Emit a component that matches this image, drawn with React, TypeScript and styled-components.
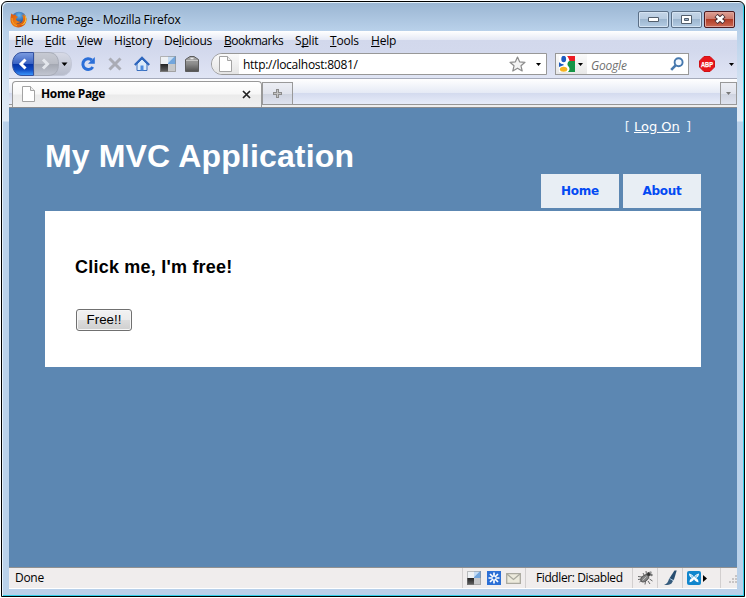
import React from "react";
import styled, { createGlobalStyle } from "styled-components";

const Global = createGlobalStyle`
  * { box-sizing: border-box; }
  body { margin: 0; background: #fff; overflow: hidden; }
  svg { display: block; flex: none; }
`;

const Frame = styled.div`
  width: 744px;
  height: 596px;
  margin: 1px;
  border: 1px solid #000;
  border-radius: 6px 6px 0 0;
  overflow: hidden;
  background: linear-gradient(#9ab5d2 0, #b9d1ea 29px, #dce8f5 100px, #e1ebf6 119px, #b9d1ea 120px);
  box-shadow: inset 1px 1px 0 #e4f1fb, inset -1px -1px 0 #2fd0ea;
  font: 12px "Open Sans", "Noto Sans", sans-serif;
  color: #000;
  padding: 0 7px;
  display: flex;
  flex-direction: column;
`;

const TitleBar = styled.div`
  height: 29px;
  flex: none;
  display: flex;
  align-items: center;
  padding: 5px 2px 0 1px;
`;
const Caption = styled.span`
  margin-left: 4px;
  padding-top: 1px;
  flex: 1;
  letter-spacing: -0.21px;
  line-height: 16px;
  white-space: nowrap;
  text-shadow: 0 0 5px #d8e6f4;
`;
const CaptionButton = styled.div<{ $close?: boolean }>`
  width: 31px;
  height: 17px;
  margin-left: 2px;
  border: 1px solid ${(p) => (p.$close ? "#4c1a20" : "#5b6f86")};
  border-radius: 2px;
  box-shadow: inset 0 0 0 1px ${(p) => (p.$close ? "#e0a49b" : "#d5e3f2")};
  background: ${(p) =>
    p.$close
      ? "linear-gradient(#dd9f94 0, #cb7869 48%, #b03c26 50%, #cb6a55 100%)"
      : "linear-gradient(#c4d5e7 0, #b7cbe0 48%, #9db6cf 50%, #b4cce4 100%)"};
  display: flex;
  align-items: center;
  justify-content: center;
`;

const MenuBar = styled.div`
  height: 21px;
  flex: none;
  display: flex;
  padding-left: 6px;
  background: linear-gradient(#fff 0, #e5e9f5 9px, #d2d8ec 9px, #d3d9ed 100%);
  line-height: 20px;
`;
const MenuItem = styled.span<{ $w: number; $ls?: number }>`
  width: ${(p) => p.$w}px;
  letter-spacing: ${(p) => p.$ls ?? -0.2}px;
  white-space: nowrap;
  u { text-underline-offset: 1px; text-decoration-skip-ink: none; }
`;

const NavBar = styled.div`
  height: 26px;
  flex: none;
  display: flex;
  align-items: center;
  padding: 0 2px 2px 3px;
  background: linear-gradient(#d3d9ed, #e0e5f5);
`;
const NavIcon = styled.span<{ $gap: number }>`
  margin-left: ${(p) => p.$gap}px;
`;
const AddressBar = styled.div`
  width: 336px;
  height: 22px;
  margin-left: 11px;
  border: 1px solid #989898;
  border-radius: 11px 0 0 11px;
  background: #fff;
  display: flex;
  align-items: center;
  overflow: hidden;
`;
const Identity = styled.div`
  width: 27px;
  height: 20px;
  padding: 2px 0 0 7px;
  background: linear-gradient(#fafafa, #e4e4e4);
`;
const Url = styled.span`
  flex: 1;
  padding: 2px 0 0 4px;
  letter-spacing: -0.26px;
  line-height: 18px;
`;
const SearchBox = styled.div`
  width: 134px;
  height: 22px;
  margin-left: 8px;
  border: 1px solid #989898;
  background: #fff;
  display: flex;
  align-items: center;
`;
const Engine = styled.div`
  width: 31px;
  height: 20px;
  display: flex;
  align-items: center;
  gap: 3px;
  padding-left: 3px;
  background: linear-gradient(#fafafa, #e8e8e8);
`;
const Placeholder = styled.span`
  flex: 1;
  padding: 2px 0 0 4px;
  font-style: italic;
  color: #707070;
  letter-spacing: -0.2px;
`;

const TabStrip = styled.div`
  height: 30px;
  flex: none;
  display: flex;
  align-items: flex-start;
  border-top: 1px solid #a6abbb;
  border-bottom: 1px solid #8a8d92;
  padding: 2px 0 0 3px;
  background: linear-gradient(#fff 0, #e5eaf5 14px, #d3daee 14px, #e7ecf9 25px, #979797 25px, #979797 26px, #eee 26px);
`;
const Tab = styled.div`
  width: 250px;
  height: 26px;
  border: 1px solid #999;
  border-bottom: 0;
  border-radius: 4px 4px 0 0;
  background: linear-gradient(#fff 0, #f7f7f7 12px, #ebebeb 13px, #f0f0f0);
  display: flex;
  align-items: center;
  padding: 1px 10px 2px 9px;
  font-weight: 700;
`;
const TabTitle = styled.span`
  flex: 1;
  margin-left: 6px;
  letter-spacing: -0.36px;
  line-height: 16px;
`;
const StripButton = styled.div<{ $w: number }>`
  width: ${(p) => p.$w}px;
  height: 23px;
  margin-top: 1px;
  border: 1px solid #999;
  background: linear-gradient(#eceef4 0, #e0e3ec 11px, #cfd4e0 11px, #dfe3ee);
  display: flex;
  align-items: center;
  justify-content: center;
`;
const Spacer = styled.div`
  flex: 1;
`;

const Page = styled.main`
  flex: 1;
  background: #5c87b2;
  padding: 0 36px;
  display: flex;
  flex-direction: column;
`;
const LogOn = styled.div`
  height: 30px;
  padding: 11px 10px 0 0;
  text-align: right;
  font: 13px/16px "DejaVu Sans", sans-serif;
  color: #e8f1fa;
  white-space: nowrap;
  a { color: #fff; text-decoration: underline; margin: 0 2px 0 0; }
`;
const SiteTitle = styled.h1`
  margin: 0;
  height: 36px;
  font: bold 32px/37px "Liberation Sans", Arial, sans-serif;
  letter-spacing: 0.15px;
  color: #fff;
  white-space: nowrap;
`;
const SiteNav = styled.nav`
  display: flex;
  justify-content: flex-end;
  gap: 4px;
  height: 37px;
`;
const NavLink = styled.a`
  width: 78px;
  height: 34px;
  background: #e8eef4;
  color: #034af3;
  font: bold 12px/34px "DejaVu Sans", sans-serif;
  letter-spacing: -0.25px;
  text-align: center;
`;
const Content = styled.section`
  height: 156px;
  background: #fff;
  padding: 45px 30px 0;
`;
const Heading = styled.h2`
  margin: 0;
  font: bold 18px/22px "Liberation Sans", Arial, sans-serif;
  letter-spacing: 0.22px;
`;
const FreeButton = styled.button`
  display: block;
  width: 56px;
  height: 22px;
  margin: 31px 0 0 1px;
  padding: 0;
  border: 1px solid #707070;
  border-radius: 3px;
  box-shadow: inset 0 0 0 1px #f6f6f6;
  background: linear-gradient(#f2f2f2 0, #ebebeb 50%, #dddddd 50%, #cfcfcf);
  font: 13.33px/20px "Liberation Sans", Arial, sans-serif;
  color: #000;
`;

const StatusBar = styled.footer`
  height: 22px;
  flex: none;
  margin-bottom: 7px;
  border-top: 1px solid #919191;
  border-bottom: 1px solid #fff;
  background: #f0eded;
  display: flex;
  line-height: 20px;
`;
const StatusText = styled.span`
  flex: 1;
  padding-left: 6px;
  letter-spacing: -0.3px;
`;
const StatusPanel = styled.div<{ $w: number; $pad: number }>`
  width: ${(p) => p.$w}px;
  padding-left: ${(p) => p.$pad}px;
  border-left: 1px solid #d2cfcf;
  display: flex;
  align-items: center;
  gap: 4px;
  letter-spacing: -0.4px;
  white-space: nowrap;
`;

const Caret = ({ color = "#000" }: { color?: string }) => (
  <svg width="5" height="3"><path d="M0 0h5L2.5 3z" fill={color} /></svg>
);

const FirefoxIcon = () => (
  <svg width="17" height="17" viewBox="0 0 17 17">
    <defs>
      <radialGradient id="globe" cx=".5" cy=".25" r=".7">
        <stop offset="0" stopColor="#66b8ef" /><stop offset="1" stopColor="#142a78" />
      </radialGradient>
      <linearGradient id="fox" x1="0" y1="0" x2="1" y2="1">
        <stop offset="0" stopColor="#d8540c" /><stop offset=".5" stopColor="#ee7d14" /><stop offset="1" stopColor="#c63a06" />
      </linearGradient>
    </defs>
    <circle cx="9" cy="8" r="7.3" fill="url(#globe)" />
    <path d="M1.4 2.5 3.5 4 6 3.6C5.3 4.5 5.6 5.3 7.8 5.8 7.5 7 6.2 7.2 6 8c.1 2.2 2.8 3.2 5 1.9-1 2.3-3.5 2.5-4.7 2 2.2 1.5 6.3.3 6.8-3.4.3-2.3-.5-3.6-1.3-4.7 1.1.4 1.8 1 2.2 1.6-.1-1.4-.8-2.3-1.5-3 2.8 1.2 4.1 3.8 4 6.4-.2 4.2-3.5 7.7-8.1 7.7C3.8 16.500.4 13.200.5 8.800.5 6 .9 4 1.400 2.500z" fill="url(#fox)" />
    <path d="M14.300 3.500c2.300 4.200.6 9.400-3.800 10.600 2.900.2 6-2.100 5.900-6.100-.1-1.800-.9-3.400-2.100-4.500z" fill="#fbc73a" />
    <path d="M2 7c-.3 4 2 7 5 7.800" stroke="#f7a32b" fill="none" />
  </svg>
);

const BackForward = () => (
  <svg width="60" height="24" viewBox="0 0 60 24">
    <defs>
      <linearGradient id="back" x1="0" y1="0" x2="0" y2="1">
        <stop offset="0" stopColor="#7d9ce0" /><stop offset=".48" stopColor="#3a63c4" />
        <stop offset=".52" stopColor="#0634a8" /><stop offset=".75" stopColor="#0f4cc4" /><stop offset="1" stopColor="#3f9bff" />
      </linearGradient>
      <linearGradient id="fwd" x1="0" y1="0" x2="0" y2="1">
        <stop offset="0" stopColor="#c7cad3" /><stop offset=".49" stopColor="#b9bcc5" />
        <stop offset=".51" stopColor="#a4a8b2" /><stop offset="1" stopColor="#c2c6d2" />
      </linearGradient>
      <linearGradient id="tail" x1="0" y1="0" x2="0" y2="1">
        <stop offset="0" stopColor="#d7dae6" /><stop offset="1" stopColor="#b7bccb" />
      </linearGradient>
    </defs>
    <path d="M10 .5h40c6 0 9.500 5 9.500 11.500S56 23.500 50 23.500H10C4 23.500.5 18 .5 12S4 .5 10 .5z" fill="url(#tail)" stroke="#c3c8d8" />
    <path d="M22 .5h14c8 0 10.500 5 10.500 11.500S44 23.500 36 23.500H22z" fill="url(#fwd)" stroke="#a7abb7" />
    <path d="M10 .5h11.500v23H10C4 23.500.5 18 .5 12S4 .5 10 .5z" fill="url(#back)" stroke="#3452a0" />
    <path d="M13.500 7.500 9 12l4.500 4.500" fill="none" stroke="#fff" strokeWidth="3" />
    <path d="m31 7.500 4.500 4.500-4.500 4.500" fill="none" stroke="#e3e6ec" strokeWidth="3" />
    <path d="M49.500 10.500h6l-3 3.500z" fill="#000" />
  </svg>
);

const ReloadIcon = () => (
  <svg width="16" height="16" viewBox="0 0 16 16">
    <path d="M12.800 11A5.400 5.400 0 1 1 11.800 4" fill="none" stroke="#2b6fd8" strokeWidth="3" />
    <path d="M14.800 1v6.800H8z" fill="#2b6fd8" />
  </svg>
);
const StopIcon = () => (
  <svg width="16" height="16" viewBox="0 0 16 16">
    <path d="m2.500 2.500 11 11m0-11-11 11" stroke="#aaacb5" strokeWidth="3" />
  </svg>
);
const HomeIcon = () => (
  <svg width="16" height="16" viewBox="0 0 16 16">
    <path d="M3 8v6.500h10V8L8 3z" fill="#dceafa" stroke="#3b6fbd" />
    <path d="M.8 9 8 1.800 15.200 9" fill="none" stroke="#2e66bd" strokeWidth="2.200" />
    <path d="M6.500 14.500v-5h3v5" fill="#4d8be0" />
  </svg>
);
const DeliciousIcon = ({ size = 16 }: { size?: number }) => (
  <svg width={size} height={size} viewBox="0 0 16 16">
    <defs>
      <linearGradient id="dark" x1="0" y1="0" x2="0" y2="1"><stop offset="0" stopColor="#222" /><stop offset="1" stopColor="#666" /></linearGradient>
      <linearGradient id="sky" x1="0" y1="0" x2="1" y2="1"><stop offset=".4" stopColor="#c5dcf4" /><stop offset=".5" stopColor="#73a6dd" /></linearGradient>
    </defs>
    <path d="M0 0h8v8H0z" fill="#eef1f4" /><path d="M8 0h8v8H8z" fill="url(#sky)" />
    <path d="M0 8h8v8H0z" fill="url(#dark)" /><path d="M8 8h8v8H8z" fill="#c7c8ca" />
    <path d="M.5.5h15v15H.5z" fill="none" stroke="#888" strokeOpacity=".6" />
  </svg>
);
const TagIcon = () => (
  <svg width="16" height="16" viewBox="0 0 16 16">
    <defs><linearGradient id="tag" x1="0" y1="0" x2="0" y2="1"><stop offset="0" stopColor="#a8a8a8" /><stop offset=".5" stopColor="#8a8a8a" /><stop offset="1" stopColor="#505050" /></linearGradient></defs>
    <path d="M1.500 15.500V3.500L6 .5h4l4.500 3v12z" fill="url(#tag)" stroke="#5c5c5c" />
    <path d="M2 4.500h12" stroke="#c4c4c4" /><path d="M6.500 2.500h3" stroke="#e8e8e8" strokeWidth="1.500" />
  </svg>
);
const DocIcon = ({ w = 13, h = 16 }: { w?: number; h?: number }) => (
  <svg width={w} height={h} viewBox="0 0 13 16">
    <path d="M.5.5H8.500l4 4v11H.5z" fill="#fff" stroke="#a3a3a3" /><path d="M8.500.5v4h4" fill="#eee" stroke="#a3a3a3" />
  </svg>
);
const StarIcon = () => (
  <svg width="17" height="16" viewBox="0 0 17 16">
    <path d="m8.500 1 2.100 4.800 5.400.5-4 3.500 1.200 5.200-4.700-2.800L3.800 15 5 9.800l-4-3.500 5.400-.5z" fill="#f3f3f3" stroke="#8c8c8c" strokeWidth="1.200" strokeLinejoin="round" />
  </svg>
);
const GoogleIcon = () => (
  <svg width="16" height="16" viewBox="0 0 16 16">
    <path d="M0 0h16v16H0z" fill="#fff" />
    <path d="M8 0h8v5h-5.500C10 3 9.300 1 8 0z" fill="#ed1c24" />
    <path d="M10 5h6v11H9c2-2 2-4 .5-5.500C8 9 8 7 10 5z" fill="#159447" />
    <path d="M0 6c2 2.500 4 1.500 5 3L0 11z" fill="#1d5bbf" />
    <ellipse cx="4.700" cy="3" rx="2.400" ry="3.200" fill="#1d5bbf" />
    <ellipse cx="4.600" cy="13.300" rx="3.700" ry="2.500" fill="#f5b321" />
  </svg>
);
const SearchIcon = () => (
  <svg width="14" height="14" viewBox="0 0 14 14">
    <circle cx="8.600" cy="5.300" r="4" fill="#f2f8ff" stroke="#4678ae" strokeWidth="1.900" />
    <path d="M5.600 8.400 1.200 12.800" stroke="#4678ae" strokeWidth="2.600" />
  </svg>
);
const AdblockIcon = () => (
  <svg width="16" height="16" viewBox="0 0 16 16" overflow="visible">
    <path d="M5 .5h6L15.500 5v6L11 15.500H5L.5 11V5z" fill="#e8151a" stroke="#cf1116" />
    <text x="2" y="10.800" fontFamily="Liberation Sans" fontWeight="bold" fontSize="7.500" textLength="12" lengthAdjust="spacingAndGlyphs" fill="#fff" stroke="#fff" strokeWidth=".25">ABP</text>
  </svg>
);
const SnowIcon = () => (
  <svg width="14" height="14" viewBox="0 0 14 14">
    <path d="M0 0h14v14H0z" fill="#2b6fd6" />
    <path d="M7 1.500v4M7 8.500v4M1.500 7h4M8.500 7h4M3 3l3 3M8 8l3 3M11 3 8 6M6 8l-3 3" stroke="#fff" strokeWidth="1.700" />
  </svg>
);
const MailIcon = () => (
  <svg width="15" height="11" viewBox="0 0 15 11">
    <path d="M.7.700h13.600v9.600H.7z" fill="#eceadc" stroke="#aaa99f" strokeWidth="1.300" />
    <path d="m1 1 6.500 5.500L14 1" fill="none" stroke="#aaa99f" strokeWidth="1.300" />
  </svg>
);
const BugIcon = () => (
  <svg width="17" height="16" viewBox="0 0 17 16">
    <path d="M1 6.500 5 7M2.500 12l3-2.500M8 14.500 8.500 11M6 3l1.500 3M9 1l.5 4M12.500 9l3 2M11 11l2 3M1 9.500l4-.5" stroke="#666" fill="none" />
    <ellipse cx="7.800" cy="8.200" rx="4.500" ry="2.700" transform="rotate(-40 7.800 8.200)" fill="#858585" stroke="#555" />
    <path d="m5.500 10.500 4-4" stroke="#bbb" />
    <circle cx="12" cy="4" r="2" fill="#333" /><circle cx="13.500" cy="2.500" r="1.200" fill="#999" /><circle cx="14.500" cy="5" r="1.200" fill="#777" />
  </svg>
);
const BrushIcon = () => (
  <svg width="15" height="16" viewBox="0 0 15 16">
    <path d="M11.500.5h2.200l-2.700 9L6.500 12 6 9z" fill="#274d70" />
    <path d="m6 9 4 2-1.500 2.500c-2 1.500-5 1.700-7.500 1.500C4 14 5 12 6 9z" fill="#375c7d" />
    <path d="m6.500 8.500 4 2" stroke="#a8c5dc" />
  </svg>
);
const ButterflyIcon = () => (
  <svg width="14" height="14" viewBox="0 0 14 14">
    <rect width="14" height="14" rx="2" fill="#1186cd" />
    <path d="M2 2.500c2.200.2 4 1.800 5 3.700 1-1.900 2.800-3.500 5-3.700 0 2.200-1 3.800-3 4.500 1.500.7 2.500 2 2.500 4.300C9.300 11 8 10 7 8.300 6 10 4.700 11 2.500 11.300c0-2.300 1-3.600 2.500-4.300C3 6.300 2 4.700 2 2.500z" fill="#fff" />
    <path d="M3.700 4.300C5 5 5.500 6 5.500 6.500M10.300 4.300C9 5 8.500 6 8.500 6.500" fill="none" stroke="#1186cd" strokeWidth=".8" />
  </svg>
);
const Grip = () => (
  <svg width="9" height="9" viewBox="0 0 9 9">
    <path d="M7 1h2v2H7zM4 4h2v2H4zM7 4h2v2H7zM1 7h2v2H1zM4 7h2v2H4zM7 7h2v2H7z" fill="#c8c5c5" />
  </svg>
);

export default function App() {
  return (
    <>
      <Global />
      <Frame>
        <TitleBar>
          <FirefoxIcon />
          <Caption>Home Page - Mozilla Firefox</Caption>
          <CaptionButton>
            <svg width="11" height="5"><path d="M.5.5h10v4H.5z" fill="#fff" stroke="#525e6c" /></svg>
          </CaptionButton>
          <CaptionButton>
            <svg width="11" height="9"><path d="M.5.5h10v8H.5z" fill="#fff" stroke="#525e6c" /><path d="M3.500 3.500h4v2h-4z" fill="#9bb2cb" stroke="#525e6c" /></svg>
          </CaptionButton>
          <CaptionButton $close>
            <svg width="12" height="10"><path d="m2 1.500 8 7m0-7-8 7" stroke="#4b3035" strokeWidth="4.600" /><path d="m2.500 2 7 6m0-6-7 6" stroke="#fff" strokeWidth="2.600" /></svg>
          </CaptionButton>
        </TitleBar>

        <MenuBar>
          <MenuItem $w={30}><u>F</u>ile</MenuItem>
          <MenuItem $w={32}><u>E</u>dit</MenuItem>
          <MenuItem $w={37}><u>V</u>iew</MenuItem>
          <MenuItem $w={50}>Hi<u>s</u>tory</MenuItem>
          <MenuItem $w={60} $ls={-0.3}>De<u>l</u>icious</MenuItem>
          <MenuItem $w={71} $ls={-0.45}><u>B</u>ookmarks</MenuItem>
          <MenuItem $w={35}>S<u>p</u>lit</MenuItem>
          <MenuItem $w={41}><u>T</u>ools</MenuItem>
          <MenuItem $w={40}><u>H</u>elp</MenuItem>
        </MenuBar>

        <NavBar>
          <BackForward />
          <NavIcon $gap={8}><ReloadIcon /></NavIcon>
          <NavIcon $gap={11}><StopIcon /></NavIcon>
          <NavIcon $gap={11}><HomeIcon /></NavIcon>
          <NavIcon $gap={10}><DeliciousIcon /></NavIcon>
          <NavIcon $gap={8}><TagIcon /></NavIcon>
          <AddressBar>
            <Identity><DocIcon /></Identity>
            <Url>http://localhost:8081/</Url>
            <StarIcon />
            <NavIcon $gap={10}><Caret /></NavIcon>
            <NavIcon $gap={5} />
          </AddressBar>
          <SearchBox>
            <Engine><GoogleIcon /><Caret /></Engine>
            <Placeholder>Google</Placeholder>
            <SearchIcon />
            <NavIcon $gap={4} />
          </SearchBox>
          <NavIcon $gap={10}><AdblockIcon /></NavIcon>
          <NavIcon $gap={14}><Caret /></NavIcon>
        </NavBar>

        <TabStrip>
          <Tab>
            <DocIcon />
            <TabTitle>Home Page</TabTitle>
            <svg width="9" height="9"><path d="m1 1 7 7m0-7-7 7" stroke="#222" strokeWidth="1.700" /></svg>
          </Tab>
          <StripButton $w={31}>
            <svg width="9" height="9"><path d="M4.500 0v9M0 4.500h9" stroke="#8c8c8c" strokeWidth="3" /><path d="M4.500 1v7M1 4.500h7" stroke="#c4c4c4" /></svg>
          </StripButton>
          <Spacer />
          <StripButton $w={17}><Caret color="#777" /></StripButton>
        </TabStrip>

        <Page>
          <LogOn>[ <a>Log On</a> ]</LogOn>
          <SiteTitle>My MVC Application</SiteTitle>
          <SiteNav>
            <NavLink>Home</NavLink>
            <NavLink>About</NavLink>
          </SiteNav>
          <Content>
            <Heading>Click me, I'm free!</Heading>
            <FreeButton>Free!!</FreeButton>
          </Content>
        </Page>

        <StatusBar>
          <StatusText>Done</StatusText>
          <StatusPanel $w={63} $pad={4}>
            <DeliciousIcon size={14} />
            <NavIcon $gap={2}><SnowIcon /></NavIcon>
            <NavIcon $gap={1}><MailIcon /></NavIcon>
          </StatusPanel>
          <StatusPanel $w={107} $pad={10}>Fiddler: Disabled</StatusPanel>
          <StatusPanel $w={25} $pad={4}><BugIcon /></StatusPanel>
          <StatusPanel $w={25} $pad={5}><BrushIcon /></StatusPanel>
          <StatusPanel $w={38} $pad={4}>
            <ButterflyIcon />
            <NavIcon $gap={-2}><svg width="4" height="7"><path d="M0 0v7l4-3.500z" /></svg></NavIcon>
          </StatusPanel>
          <StatusPanel $w={17} $pad={7}><Grip /></StatusPanel>
        </StatusBar>
      </Frame>
    </>
  );
}
